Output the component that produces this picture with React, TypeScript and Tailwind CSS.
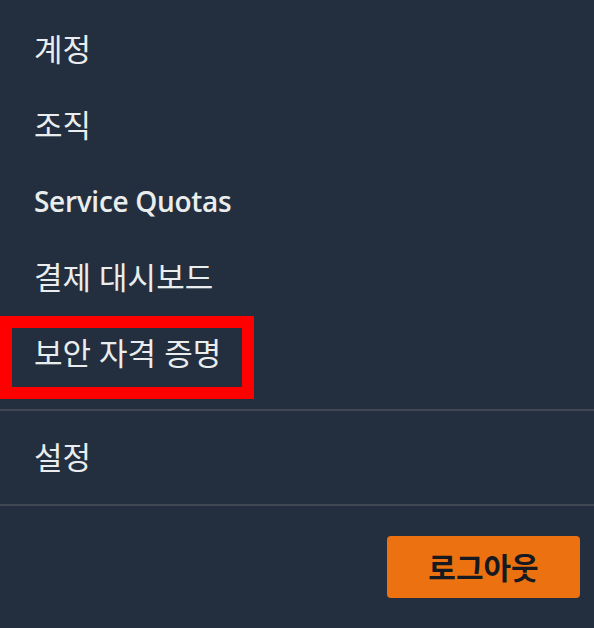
const items = [
  { label: "계정" },
  { label: "조직" },
  { label: "Service Quotas", latin: true },
  { label: "결제 대시보드" },
  { label: "보안 자격 증명", marked: true },
];

const font = { fontFamily: '"Open Sans", "Noto Sans CJK KR", sans-serif' };

export default function App() {
  return (
    <div className="w-[594px] h-[628px] bg-[#232f3e] text-[#eaeded] overflow-hidden" style={font}>
      <ul className="pt-[11px]">
        {items.map((item) => (
          <li key={item.label} className="relative h-[76px] flex items-center pl-[34px]">
            {item.marked && (
              <span className="absolute left-0 top-[1px] w-[254px] h-[83px] border-[12px] border-[#ff0000]" />
            )}
            <span
              className={`leading-none ${
                item.latin ? "text-[28px] font-semibold tracking-[-0.3px]" : "text-[31px] font-normal"
              }`}
            >
              {item.label}
            </span>
          </li>
        ))}
      </ul>
      <div className="mt-[18px] h-[2px] bg-[#3f4752]" />
      <div className="h-[93px] flex items-center pl-[34px]">
        <span className="text-[31px] leading-none">설정</span>
      </div>
      <div className="h-[2px] bg-[#3f4752]" />
      <div className="flex justify-end pr-[14px] pt-[30px]">
        <button className="w-[193px] h-[62px] rounded-[4px] bg-[#ec7211] text-[#16191f] text-[30px] font-bold flex items-center justify-center">
          로그아웃
        </button>
      </div>
    </div>
  );
}
